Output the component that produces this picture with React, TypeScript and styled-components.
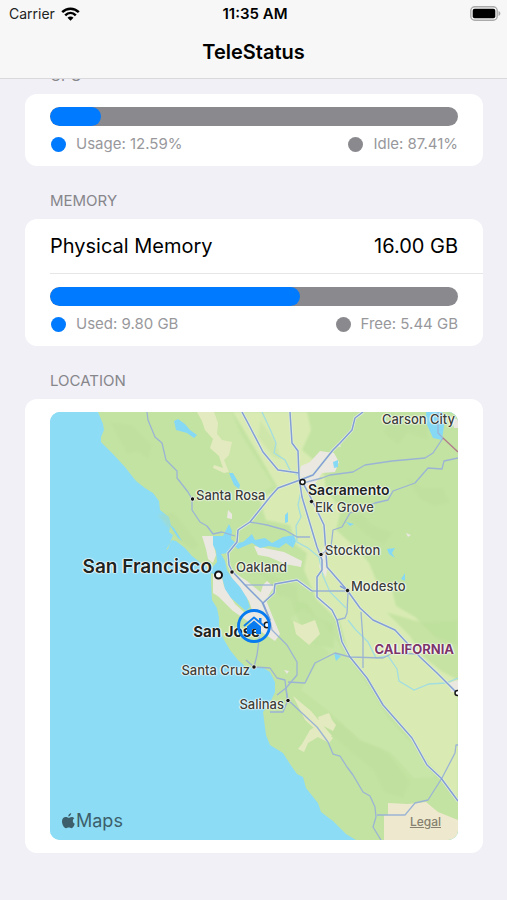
import React from "react";
import styled, { createGlobalStyle } from "styled-components";

const GlobalStyle = createGlobalStyle`
  * { box-sizing: border-box; }
  body {
    margin: 0;
    background: #f1f0f6;
    color: #000;
    font-family: Inter, "Liberation Sans", sans-serif;
  }
`;

const Screen = styled.div`
  min-height: 100vh;
  display: flex;
  flex-direction: column;
`;

const TopBar = styled.header`
  position: sticky;
  top: 0;
  z-index: 10;
  background: #f7f7f7;
  border-bottom: 1px solid #d9d9dc;
`;

const StatusBar = styled.div`
  display: grid;
  grid-template-columns: 1fr auto 1fr;
  align-items: center;
  height: 27px;
  padding: 0 6px 0 9px;
  font-size: 14px;
  line-height: 20px;
`;

const Carrier = styled.span`
  display: flex;
  align-items: center;
  gap: 6px;
  color: #222;
`;

const Clock = styled.time`
  font-size: 15px;
  font-weight: 600;
`;

const BatterySlot = styled.span`
  display: flex;
  justify-content: flex-end;
`;

const Title = styled.h1`
  margin: 0;
  height: 51px;
  font-size: 20px;
  font-weight: 600;
  line-height: 51px;
  text-align: center;
`;

const Content = styled.main`
  padding: 0 24px 40px 25px;
  margin-top: -38px;
`;

const SectionTitle = styled.h2`
  margin: 0;
  padding: 25px 25px 8px;
  color: #86868b;
  font-size: 15px;
  font-weight: 400;
  line-height: 20px;
  text-transform: uppercase;
`;

const Card = styled.div`
  background: #fff;
  border-radius: 12px;
`;

const ValueRow = styled.div`
  display: flex;
  align-items: center;
  justify-content: space-between;
  height: 55px;
  margin-left: 25px;
  padding-right: 25px;
  border-bottom: 1px solid #e6e6e8;
  font-size: 20px;
`;

const Usage = styled.div`
  padding: 13px 25px 12px;
`;

const Track = styled.div`
  height: 19px;
  overflow: hidden;
  border-radius: 10px;
  background: #8a898e;
`;

const Fill = styled.div`
  height: 100%;
  border-radius: 10px;
  background: #007aff;
`;

const Legend = styled.div`
  display: flex;
  justify-content: space-between;
  margin-top: 8px;
`;

const LegendItem = styled.span<{ $color: string }>`
  display: flex;
  align-items: center;
  gap: 10px;
  color: #98989c;
  font-size: 15px;
  line-height: 20px;

  &::before {
    content: "";
    width: 15px;
    height: 15px;
    margin-left: 1px;
    border-radius: 50%;
    background: ${(p) => p.$color};
  }
`;

const MapCard = styled(Card)`
  padding: 13px 25px;
`;

const MapFrame = styled.div`
  position: relative;
  overflow: hidden;
  border-radius: 10px;
  background: #8cdcf5;
`;

const MapDrawing = styled.svg`
  display: block;
  width: 100%;
  height: auto;
`;

type LabelKind = "town" | "city" | "capital" | "metro" | "state";

const labelSize: Record<LabelKind, number> = { town: 13, city: 15, capital: 14, metro: 19, state: 13 };
const labelWeight: Record<LabelKind, number> = { town: 500, city: 700, capital: 600, metro: 600, state: 700 };

const MapLabel = styled.span<{ $kind: LabelKind; $end: boolean }>`
  position: absolute;
  transform: translate(${(p) => (p.$end ? "-100%" : "0")}, -50%);
  color: ${(p) => (p.$kind === "state" ? "#7b3568" : p.$kind === "town" ? "#3b4039" : "#202421")};
  font-size: ${(p) => labelSize[p.$kind]}px;
  font-weight: ${(p) => labelWeight[p.$kind]};
  line-height: 1;
  white-space: nowrap;
  text-shadow: 0 0 2px #fff, 0 0 2px #fff, 1px 0 1px #fffc, -1px 0 1px #fffc;
`;

const HomePin = styled.svg`
  position: absolute;
  left: 50%;
  top: 50%;
  width: 36px;
  height: 36px;
  transform: translate(-50%, -50%);
`;

const Attribution = styled.span`
  position: absolute;
  left: 12px;
  bottom: 8px;
  display: flex;
  align-items: center;
  gap: 1px;
  color: #3c5f6b;
  font-size: 18px;
  line-height: 22px;
`;

const LegalLink = styled.a`
  position: absolute;
  right: 17px;
  bottom: 8px;
  color: #85806f;
  font-size: 12px;
  font-weight: 500;
  line-height: 20px;
  text-decoration: underline;
`;

const MAP = { x: 50, y: 412, width: 408, height: 428 };

const labels: { text: string; x: number; y: number; kind: LabelKind; end?: boolean }[] = [
  { text: "Carson City", x: 455, y: 419, kind: "town", end: true },
  { text: "Santa Rosa", x: 196, y: 495, kind: "town" },
  { text: "Sacramento", x: 308, y: 490, kind: "capital" },
  { text: "Elk Grove", x: 315, y: 507, kind: "town" },
  { text: "Stockton", x: 325, y: 550, kind: "town" },
  { text: "Oakland", x: 236, y: 567, kind: "town" },
  { text: "San Francisco", x: 212, y: 566, kind: "metro", end: true },
  { text: "Modesto", x: 351, y: 586, kind: "town" },
  { text: "San Jose", x: 260, y: 631, kind: "city", end: true },
  { text: "CALIFORNIA", x: 454, y: 649, kind: "state", end: true },
  { text: "Santa Cruz", x: 250, y: 670, kind: "town", end: true },
  { text: "Salinas", x: 284, y: 704, kind: "town", end: true },
];

const minorRoads = [
  "M147 412L148 420L155 437L162 443L166 460L177 471V478L188 492L192 499V510L200 522L207 526L213 534L222 532L235 536",
  "M303 483L322 478L330 475L353 472L365 465L392 461L425 458L433 453L443 438L438 433V412",
  "M458 458L444 461L442 469L428 468L415 483L393 491L388 500L375 503L350 513L342 527L333 530L331 547L321 555",
  "M250 522L267 525L285 530L297 537H310",
  "M245 585H273",
  "M312 591H347M348 593L347 613L345 618L337 620",
  "M270 620L272 630L287 645L297 662V675L286 688L288 700L317 727L328 742L333 754L340 756L347 767L353 775L363 792L370 796L375 807L376 817L373 827L381 840",
  "M288 682L305 683L315 663L335 653L350 657L383 658L393 653L418 654",
  "M361 612L363 640V668",
  "M260 632L257 655L254 667L270 668L277 678L285 680L287 698M254 667L246 660",
  "M288 700L283 712H270M277 695L286 688",
  "M377 815H405L415 803L428 800L442 778L455 753L456 745H458",
];

const majorRoads = [
  "M242 412L250 427L263 452L278 470L299 473",
  "M290 412L292 443L298 451L299 477L302 497L317 547L322 560V570L317 577V597L332 610L337 620L342 642L350 657L367 678L383 705L412 738L427 765L441 778L458 801",
  "M303 483L312 500L324 525L327 567L347 590L360 608L373 620L395 630L420 657L437 673L458 694",
  "M363 412L355 418L352 430L340 443L333 450L313 475L300 480L278 488L270 497L250 522L238 530L237 542L228 553L229 565L232 571L245 585L262 602L270 620",
  "M347 590L340 586M312 591L297 580L275 584L274 593L263 603L270 620",
];

function CaliforniaMap() {
  return (
    <MapDrawing viewBox={`${MAP.x} ${MAP.y} ${MAP.width} ${MAP.height}`} aria-hidden="true">
      <defs>
        <filter id="soft" x="-5%" y="-5%" width="110%" height="110%">
          <feGaussianBlur stdDeviation="1.2" />
        </filter>
      </defs>
      <path fill="#8cdcf5" d="M50 412H458V840H50Z" />
      <path
        fill="#c3e3a2"
        d="M98 412L103 424L104 430L101 437V442L113 454L125 467L136 481L145 488L153 493L159 501L160 510L169 517L171 525L169 532L173 535L168 549L166 550L172 540L176 541L185 548L192 556L201 563L211 570L211 582L212 600L217 608L219 618L219 627L223 638L230 650L238 660L247 668L254 667L262 667L270 672L275 682V692L270 703L263 712L266 735L270 745L283 753L290 764L297 774L303 777L306 788L318 803L321 812L333 821L338 826L346 834L356 840H458V412Z"
      />
      <g filter="url(#soft)">
        <path fill="#d9ebb3" d="M233 412H307L311 430L302 450L323 468L326 490L341 509L336 530L356 548L369 563L376 580L392 590L396 606L415 617L436 638L458 645V800L441 778L424 758L412 738L383 705L367 678L349 656L340 622L317 600L304 570L307 553L296 545L290 525L266 520L260 500L278 488L259 455L244 430Z" />
        <path fill="#cbe6a8" d="M197 412L212 428L222 459L235 483L250 500L274 486L258 461L240 432L232 412Z" />
        <path fill="#b9dc98" d="M260 420L274 439L282 460L273 457L258 437ZM391 415L427 426L428 440L407 433L398 445L384 433ZM347 517L362 514L372 525L393 533L384 544L370 538ZM405 477L424 488L443 488L450 503L434 506L420 499ZM110 422L132 425L152 445L148 459L138 452L127 454ZM158 515L174 512L185 526L199 545L193 550L178 540ZM256 568L274 576L297 587L298 600L279 596ZM297 702L316 718L345 722L389 754L410 782L403 798L384 792L374 771L343 745L318 724L304 721Z" opacity=".3" />
        <path fill="#c8e6a8" d="M303 610L323 622L337 641L363 678L388 718L415 747L435 777L414 778L390 752L360 740L325 708L301 690L306 681L318 662L330 653L308 637L290 618Z" />
        <path fill="#bddf9d" d="M290 598L307 603L318 618L333 624L334 648L315 645L303 630L295 612ZM386 612L420 622L458 620V680L441 671L424 657L409 635Z" opacity=".7" />
      </g>
      <path fill="#e4eac0" d="M197 412H214L218 423L217 434L222 440L232 442L229 455L224 460L229 472L224 473L213 468L214 465L223 468L219 456L210 448L213 439L205 430L202 421ZM293 621L302 625L315 620L320 634L309 645L296 634ZM318 717L329 713L332 720L336 725L333 731L320 724ZM302 744L310 730L318 725L333 738L329 743L318 737L308 743L304 752L298 749ZM293 696L311 711L332 736L324 737L305 720Z" />
      <path fill="#eee9ce" d="M388 803L408 804L426 802L438 812L458 820V840H384V815H388Z" />
      <path fill="#ebe7e1" d="M301 466L310 462L320 451L334 453L339 462L335 472L322 473L317 481L311 489L300 486L299 475ZM202 536L213 536L214 546L216 555L213 563L208 559L206 549ZM213 570L221 573L224 586L235 604L246 614L252 610L249 601L238 588L230 575L232 571L247 581L264 595L272 615L280 634L275 641L263 633L255 626L246 620L233 611L219 597L213 593ZM228 510L232 514V519L227 518ZM254 546L269 549L284 552L302 561L301 567L285 564L269 557L258 555ZM267 581L274 587L265 601L260 595L263 585ZM449 683L458 680V693L451 692ZM323 547L328 562L326 577L319 567Z" />
      <path fill="#ebe7e1" d="M339 443L337 446L341 447ZM406 533L411 535L408 537ZM284 670L289 671L287 674ZM452 419H458V428H454Z" />
      <g fill="#86d9f4">
        <path d="M213 536L223 536L229 524L232 531L231 539L236 543L228 553L221 554L225 561L227 570L232 578L240 587L247 598L250 607L246 611L239 605L231 598L225 589L222 577L211 573L210 570L217 562L216 551L213 545Z" />
        <path d="M232 544L243 542L252 534L255 540L265 538L272 543L283 537L294 535L296 541L293 548L286 543L279 548L269 546L260 548L252 543L238 549Z" />
        <path d="M174 421L178 419L185 424L190 430L197 435L194 438L187 433L176 430ZM229 473L233 473L240 485L239 489L234 485ZM169 524L174 528L182 541L178 538ZM333 462L338 460L338 467L334 468ZM285 515L288 512V522L285 523ZM346 522L354 524L350 526ZM387 549L395 548L392 553L395 558L389 554ZM401 579L405 573V581ZM334 653L341 656L336 661ZM426 412H442L445 419L442 440L433 438L427 425Z" />
      </g>
      <g fill="none" stroke="#a3dde0" strokeWidth="1.3">
        <path d="M262 412L270 429L276 443L274 453L285 460L290 470L299 476M302 487L298 505L301 517L296 526L297 542L308 548L319 557L323 576L330 592L346 608M348 620L355 629L368 642L376 658L388 656L397 669L399 681L414 690L429 684L446 683L458 678" />
      </g>
      <g fill="none" stroke="#e1edda" strokeWidth="3" strokeLinejoin="round">
        {majorRoads.map((d) => <path key={d} d={d} />)}
      </g>
      <g fill="none" stroke="#9bb4d4" strokeWidth="1.3" strokeLinejoin="round">
        {minorRoads.map((d) => <path key={d} d={d} />)}
      </g>
      <g fill="none" stroke="#839fd5" strokeWidth="1.5" strokeLinejoin="round">
        {majorRoads.map((d) => <path key={d} d={d} />)}
      </g>
      <path d="M443 438L458 452" stroke="#b17d8b" strokeWidth="1.3" />
      <g fill="#fff" stroke="#151515">
        <circle cx="218.500" cy="575" r="3.500" strokeWidth="2" />
        <circle cx="302.500" cy="482" r="2.500" strokeWidth="1.500" />
        <circle cx="267" cy="625" r="2.800" strokeWidth="1.600" />
        <circle cx="457.500" cy="693" r="2.500" strokeWidth="1.500" />
      </g>
      <g fill="#151515" stroke="#fff" strokeWidth=".8">
        <circle cx="192.500" cy="499" r="2.200" />
        <circle cx="232" cy="572" r="2.200" />
        <circle cx="311.500" cy="501.500" r="2.200" />
        <circle cx="321" cy="554.500" r="2.200" />
        <circle cx="347.500" cy="590.500" r="2.200" />
        <circle cx="254" cy="667" r="2.200" />
        <circle cx="288" cy="700.500" r="2.200" />
      </g>
    </MapDrawing>
  );
}

function WifiIcon() {
  return (
    <svg width="19" height="14" viewBox="0 0 19 14" aria-label="Wi-Fi" role="img">
      <g fill="none" stroke="#000" strokeWidth="2.500">
        <path d="M1.200 5.200C5.900.6 13.100.6 17.800 5.200" />
        <path d="M4.200 8.300C7.300 5.300 11.700 5.300 14.800 8.300" />
      </g>
      <path d="M6.500 10.700C8.200 9.100 10.800 9.100 12.500 10.700L9.500 13.700Z" />
    </svg>
  );
}

function BatteryIcon() {
  return (
    <svg width="31" height="15" viewBox="0 0 31 15" aria-label="Battery full" role="img">
      <rect x=".8" y=".8" width="26.400" height="13.400" rx="4" fill="#f7f7f7" stroke="#aaa" strokeWidth="1.400" />
      <rect x="2.700" y="2.700" width="22.600" height="9.600" rx="2" />
      <path d="M28.500 5C31 5.700 31 9.300 28.500 10Z" fill="#aaa" />
    </svg>
  );
}

function UsageMeter(props: { name: string; percent: number; used: string; rest: string }) {
  return (
    <Usage>
      <Track role="progressbar" aria-label={props.name} aria-valuenow={props.percent} aria-valuemin={0} aria-valuemax={100}>
        <Fill style={{ width: `${props.percent}%` }} />
      </Track>
      <Legend>
        <LegendItem $color="#007aff">{props.used}</LegendItem>
        <LegendItem $color="#8a898e">{props.rest}</LegendItem>
      </Legend>
    </Usage>
  );
}

export default function App() {
  return (
    <Screen>
      <GlobalStyle />
      <TopBar>
        <StatusBar>
          <Carrier>Carrier <WifiIcon /></Carrier>
          <Clock>11:35 AM</Clock>
          <BatterySlot><BatteryIcon /></BatterySlot>
        </StatusBar>
        <Title>TeleStatus</Title>
      </TopBar>
      <Content>
        <section>
          <SectionTitle>CPU</SectionTitle>
          <Card>
            <UsageMeter name="CPU usage" percent={12.59} used="Usage: 12.59%" rest="Idle: 87.41%" />
          </Card>
        </section>
        <section>
          <SectionTitle>Memory</SectionTitle>
          <Card>
            <ValueRow>
              <span>Physical Memory</span>
              <span>16.00 GB</span>
            </ValueRow>
            <UsageMeter name="Memory used" percent={61.25} used="Used: 9.80 GB" rest="Free: 5.44 GB" />
          </Card>
        </section>
        <section>
          <SectionTitle>Location</SectionTitle>
          <MapCard>
            <MapFrame>
              <CaliforniaMap />
              {labels.map((l) => (
                <MapLabel
                  key={l.text}
                  $kind={l.kind}
                  $end={!!l.end}
                  style={{
                    left: `${((l.x - MAP.x) / MAP.width) * 100}%`,
                    top: `${((l.y - MAP.y) / MAP.height) * 100}%`,
                  }}
                >
                  {l.text}
                </MapLabel>
              ))}
              <HomePin viewBox="0 0 36 36" role="img" aria-label="Home">
                <circle cx="18" cy="18" r="15.500" fill="none" stroke="#087bf0" strokeWidth="2.800" />
                <path d="M11 18.500L18 12.500L25 18.500V26H20V21H16V26H11Z" fill="#087bf0" />
                <path d="M8.500 17.500L18 9.500L27.500 17.500" fill="none" stroke="#087bf0" strokeWidth="1.800" strokeLinecap="round" strokeLinejoin="round" />
                <path d="M23 10H25.500V15L23 13Z" fill="#087bf0" />
              </HomePin>
              <Attribution>
                <svg width="13" height="16" viewBox="0 0 14 17" fill="currentColor" aria-label="Apple" role="img">
                  <path d="M9.900 0C10 1.800 8.500 3.700 6.800 3.700C6.600 2 8.200.2 9.900 0ZM13.300 5.600C10.900 7 11.300 10.500 13.800 11.500C13.100 13.500 11.700 16.200 10.200 16.200C9.100 16.200 8.700 15.500 7.300 15.500C5.900 15.500 5.400 16.200 4.400 16.200C2.300 16.200 0 12.300 0 9C0 5.800 2 4.200 4 4.200C5.300 4.200 6.300 5 7.100 5C7.800 5 9 4.100 10.500 4.100C11.700 4.100 12.700 4.700 13.300 5.600Z" />
                </svg>
                Maps
              </Attribution>
              <LegalLink href="#legal">Legal</LegalLink>
            </MapFrame>
          </MapCard>
        </section>
      </Content>
    </Screen>
  );
}
